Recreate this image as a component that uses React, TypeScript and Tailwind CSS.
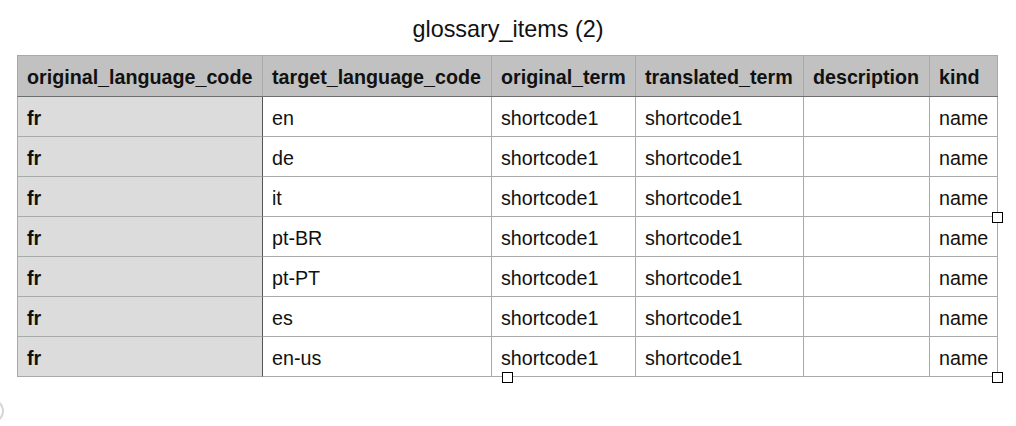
import React from 'react';

const columns = [
  { key: 'original_language_code', width: 'w-[245px]' },
  { key: 'target_language_code', width: 'w-[229px]' },
  { key: 'original_term', width: 'w-[144px]' },
  { key: 'translated_term', width: 'w-[168px]' },
  { key: 'description', width: 'w-[126px]' },
  { key: 'kind', width: 'w-[68px]' },
];

const rows = ['en', 'de', 'it', 'pt-BR', 'pt-PT', 'es', 'en-us'].map((target) => ({
  original_language_code: 'fr',
  target_language_code: target,
  original_term: 'shortcode1',
  translated_term: 'shortcode1',
  description: '',
  kind: 'name',
}));

function Handle({ className }: { className: string }) {
  return <div className={`absolute w-[11px] h-[11px] bg-white border border-black ${className}`} />;
}

export default function App() {
  return (
    <div className="relative w-[1016px] h-[426px] bg-white text-[#111] overflow-hidden" style={{ fontFamily: '"Liberation Sans", Arial, sans-serif' }}>
      <div className="h-[55px] flex items-center justify-center pt-[5px] text-[23.4px]">glossary_items (2)</div>

      <div className="relative ml-[17px] w-[981px] text-[19.7px]">
        {/* header */}
        <div className="flex h-[42px] bg-[#c0c1c0] border-t border-l border-[#a9a9a9] border-b border-b-[#6e6e6e]">
          {columns.map((c) => (
            <div key={c.key} className={`${c.width} shrink-0 border-r border-[#a9a9a9] pl-[9px] pt-[3px] flex items-center font-bold`}>
              {c.key}
            </div>
          ))}
        </div>

        {/* body */}
        {rows.map((r, i) => (
          <div key={i} className="flex h-[40px] border-l border-[#a9a9a9]">
            {columns.map((c, j) => (
              <div
                key={c.key}
                className={`${c.width} shrink-0 border-b border-[#a9a9a9] pl-[9px] pt-[4px] flex items-center ${
                  j === 0 ? 'bg-[#dcdcdc] font-bold border-r border-r-[#555]' : 'border-r border-r-[#a9a9a9]'
                }`}
              >
                {r[c.key as keyof typeof r]}
              </div>
            ))}
          </div>
        ))}

        {/* selection handles */}
        <Handle className="left-[975px] top-[157px]" />
        <Handle className="left-[485px] top-[317px]" />
        <Handle className="left-[975px] top-[317px]" />
      </div>

      {/* partially visible control at left edge */}
      <svg className="absolute left-0 top-[398px]" width="6" height="26" viewBox="0 0 6 26">
        <path d="M-8 2 A 11 11 0 0 1 -8 24" fill="none" stroke="#d6d6d6" strokeWidth="2" />
      </svg>
    </div>
  );
}
